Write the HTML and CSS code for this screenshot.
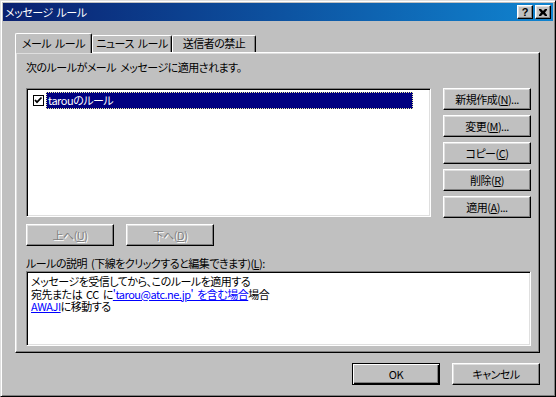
FILE: index.html
```html
<!DOCTYPE html>
<html lang="ja">
<head>
    <meta charset="UTF-8">
    <meta name="viewport" content="width=device-width, initial-scale=1.0">
    <title>メッセージ ルール</title>
    <link rel="stylesheet" href="styles.css">
</head>
<body>
    <div class="window">
        <div class="titlebar">
            <span class="title">メッセージ ルール</span>
            <div class="caption-buttons">
                <button class="cap-btn help">?</button>
                <button class="cap-btn">
                    <svg width="8" height="7" viewBox="0 0 8 7">
                        <path d="M0 0h2l2 2 2-2h2v1L6 3.5 8 6v1H6L4 5 2 7H0V6l2-2.5L0 1z" fill="#000"/>
                    </svg>
                </button>
            </div>
        </div>

        <div class="dialog-body">
            <div class="tabs">
                <div class="tab tab-active">メール ルール</div>
                <div class="tab tab-news">ニュース ルール</div>
                <div class="tab tab-block">送信者の禁止</div>
            </div>

            <div class="panel">
                <p class="intro">次のルールがメール メッセージに適用されます。</p>

                <div class="rules-row">
                    <div class="listbox">
                        <div class="rule-item">
                            <svg class="check" width="11" height="11" viewBox="0 0 11 11">
                                <rect x="0.5" y="0.5" width="10" height="10" fill="#fff" stroke="#000"/>
                                <path d="M2 5l2 2.2L8.5 2.5" fill="none" stroke="#000" stroke-width="1.8"/>
                            </svg>
                            <span class="rule-name">tarouのルール</span>
                        </div>
                    </div>

                    <div class="side-buttons">
                        <button class="btn">新規作成(<u>N</u>)...</button>
                        <button class="btn">変更(<u>M</u>)...</button>
                        <button class="btn">コピー(<u>C</u>)</button>
                        <button class="btn">削除(<u>R</u>)</button>
                        <button class="btn">適用(<u>A</u>)...</button>
                    </div>
                </div>

                <div class="move-buttons">
                    <button class="btn" disabled>上へ(<u>U</u>)</button>
                    <button class="btn" disabled>下へ(<u>D</u>)</button>
                </div>

                <p class="desc-label">ルールの説明 (下線をクリックすると編集できます)(<u>L</u>):</p>
                <div class="desc-box">
                    <div class="desc-line">メッセージを受信してから、このルールを適用する</div>
                    <div class="desc-line">宛先または CC に<a href="#">'tarou@atc.ne.jp' を含む場合</a>場合</div>
                    <div class="desc-line"><a href="#">AWAJI</a>に移動する</div>
                </div>
            </div>

            <div class="footer">
                <button class="btn btn-default">OK</button>
                <button class="btn">キャンセル</button>
            </div>
        </div>
    </div>
</body>
</html>
```

FILE: styles.css
```css
body {
    margin: 0;
    padding: 0;
    background-color: #c0c0c0;
    font-family: "Noto Sans CJK JP", "Noto Sans", sans-serif;
    font-size: 11px;
    letter-spacing: -0.5px;
    word-spacing: 2px;
    font-feature-settings: "palt";
    color: #000;
}

p {
    margin: 0;
}

/* ventana */
.window {
    width: 556px;
    height: 397px;
    box-sizing: border-box;
    padding: 2px;
    background-color: #c0c0c0;
    border: 1px solid;
    border-color: #dfdfdf #000 #000 #dfdfdf;
    box-shadow: inset 1px 1px #fff, inset -1px -1px #808080;
    display: flex;
    flex-direction: column;
}

.titlebar {
    height: 18px;
    display: flex;
    align-items: center;
    justify-content: space-between;
    padding: 0 2px 0 2px;
    background: linear-gradient(to right, #0a2070, #1084d0);
    color: #fff;
}

.title {
    line-height: 18px;
    white-space: nowrap;
}

.caption-buttons {
    display: flex;
    gap: 2px;
}

.cap-btn {
    width: 16px;
    height: 14px;
    padding: 0;
    box-sizing: border-box;
    background-color: #c0c0c0;
    border: 1px solid;
    border-color: #fff #000 #000 #fff;
    box-shadow: inset -1px -1px #808080, inset 1px 1px #dfdfdf;
    display: flex;
    align-items: center;
    justify-content: center;
    font-family: "Liberation Sans", sans-serif;
    font-weight: bold;
    font-size: 11px;
    letter-spacing: 0;
    line-height: 11px;
    color: #000;
}

.dialog-body {
    flex: 1;
    padding: 12px 13px 0 12px;
}

/* pestañas */
.tabs {
    display: flex;
    align-items: flex-end;
    height: 19px;
}

.tab {
    box-sizing: border-box;
    height: 17px;
    line-height: 14px;
    text-align: center;
    white-space: nowrap;
    background-color: #c0c0c0;
    border: 1px solid;
    border-bottom: none;
    border-color: #fff #000 #000 #fff;
    border-radius: 2px 2px 0 0;
    box-shadow: inset -1px 0 #808080;
}

.tab-active {
    width: 77px;
    height: 20px;
    padding-top: 2px;
    margin-bottom: -1px;
    position: relative;
    z-index: 1;
}

.tab-news {
    width: 80px;
}

.tab-block {
    width: 84px;
}

.panel {
    width: 525px;
    height: 301px;
    box-sizing: border-box;
    padding: 7px 8px 0 10px;
    border: 1px solid;
    border-color: #fff #000 #000 #fff;
    box-shadow: inset -1px -1px #808080, inset 1px 1px #dfdfdf;
}

.intro {
    line-height: 14px;
}

.rules-row {
    display: flex;
    gap: 12px;
    margin-top: 14px;
}

.listbox {
    width: 405px;
    height: 129px;
    box-sizing: border-box;
    background-color: #fff;
    border: 1px solid;
    border-color: #808080 #fff #fff #808080;
    box-shadow: inset 1px 1px #000, inset -1px -1px #dfdfdf;
    padding: 2px 0 0 1px;
}

.rule-item {
    display: flex;
    align-items: center;
    height: 17px;
    margin-top: 1px;
    padding-left: 5px;
}

.check {
    margin-right: 2px;
}

.rule-name {
    width: 367px;
    height: 17px;
    box-sizing: border-box;
    padding-left: 1px;
    line-height: 15px;
    background-color: #000080;
    color: #fff;
    border: 1px dotted #f0f0a0;
}

.side-buttons {
    display: flex;
    flex-direction: column;
    gap: 5px;
}

/* botones */
.btn {
    width: 88px;
    height: 22px;
    box-sizing: border-box;
    padding: 0;
    background-color: #c0c0c0;
    border: 1px solid;
    border-color: #fff #000 #000 #fff;
    box-shadow: inset -1px -1px #808080, inset 1px 1px #dfdfdf;
    font-family: inherit;
    font-size: 11px;
    letter-spacing: -0.5px;
    font-feature-settings: "palt";
    color: #000;
    line-height: 14px;
    white-space: nowrap;
}

.btn:disabled {
    color: #808080;
    text-shadow: 1px 1px #fff;
}

.btn-default {
    border-color: #000;
    box-shadow: inset 1px 1px #fff, inset -1px -1px #000, inset -2px -2px #808080;
}

.move-buttons {
    display: flex;
    gap: 12px;
    margin-top: 6px;
}

.desc-label {
    line-height: 14px;
    margin-top: 10px;
}

.desc-box {
    width: 505px;
    height: 75px;
    box-sizing: border-box;
    margin-top: 1px;
    padding: 3px 4px;
    background-color: #fff;
    border: 1px solid;
    border-color: #808080 #fff #fff #808080;
    box-shadow: inset 1px 1px #000, inset -1px -1px #dfdfdf;
}

.desc-line {
    height: 12.5px;
    line-height: 12.5px;
    white-space: nowrap;
}

.desc-box a {
    color: #0000ff;
}

.footer {
    display: flex;
    justify-content: flex-end;
    gap: 12px;
    margin-top: 10px;
}
```
